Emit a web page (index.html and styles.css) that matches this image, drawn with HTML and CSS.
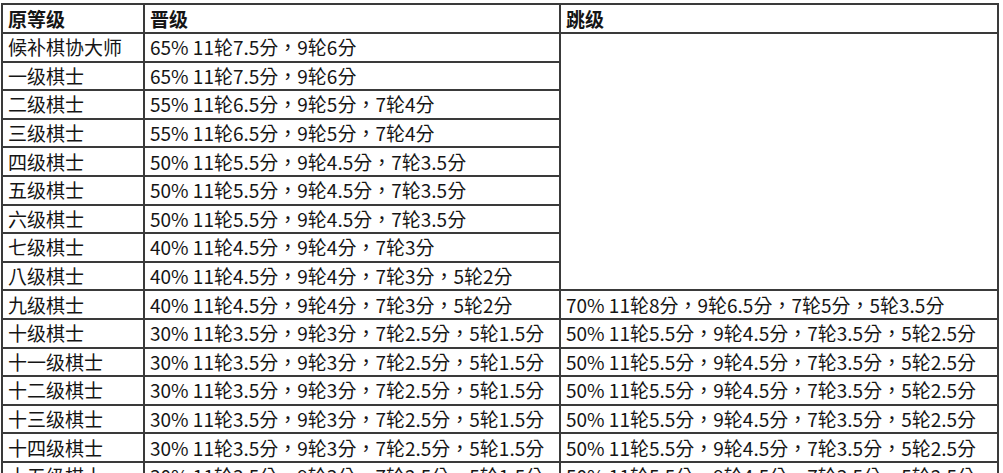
FILE: index.html
```html
<!DOCTYPE html>
<html lang="zh-Hant-TW">
<head>
<meta charset="utf-8">
<link rel="stylesheet" href="styles.css">
</head>
<body>
<div class="wrap">
<table class="grade">
<colgroup><col class="c1"><col class="c2"><col class="c3"></colgroup>
<thead>
<tr class="head"><th>原等级</th><th>晋级</th><th>跳级</th></tr>
</thead>
<tbody>
<tr><td>候补棋协大师</td><td>65% 11轮7.5分，9轮6分</td><td rowspan="9"></td></tr>
<tr><td>一级棋士</td><td>65% 11轮7.5分，9轮6分</td></tr>
<tr><td>二级棋士</td><td>55% 11轮6.5分，9轮5分，7轮4分</td></tr>
<tr><td>三级棋士</td><td>55% 11轮6.5分，9轮5分，7轮4分</td></tr>
<tr><td>四级棋士</td><td>50% 11轮5.5分，9轮4.5分，7轮3.5分</td></tr>
<tr><td>五级棋士</td><td>50% 11轮5.5分，9轮4.5分，7轮3.5分</td></tr>
<tr><td>六级棋士</td><td>50% 11轮5.5分，9轮4.5分，7轮3.5分</td></tr>
<tr><td>七级棋士</td><td>40% 11轮4.5分，9轮4分，7轮3分</td></tr>
<tr><td>八级棋士</td><td>40% 11轮4.5分，9轮4分，7轮3分，5轮2分</td></tr>
<tr><td>九级棋士</td><td>40% 11轮4.5分，9轮4分，7轮3分，5轮2分</td><td>70% 11轮8分，9轮6.5分，7轮5分，5轮3.5分</td></tr>
<tr><td>十级棋士</td><td>30% 11轮3.5分，9轮3分，7轮2.5分，5轮1.5分</td><td>50% 11轮5.5分，9轮4.5分，7轮3.5分，5轮2.5分</td></tr>
<tr><td>十一级棋士</td><td>30% 11轮3.5分，9轮3分，7轮2.5分，5轮1.5分</td><td>50% 11轮5.5分，9轮4.5分，7轮3.5分，5轮2.5分</td></tr>
<tr><td>十二级棋士</td><td>30% 11轮3.5分，9轮3分，7轮2.5分，5轮1.5分</td><td>50% 11轮5.5分，9轮4.5分，7轮3.5分，5轮2.5分</td></tr>
<tr><td>十三级棋士</td><td>30% 11轮3.5分，9轮3分，7轮2.5分，5轮1.5分</td><td>50% 11轮5.5分，9轮4.5分，7轮3.5分，5轮2.5分</td></tr>
<tr><td>十四级棋士</td><td>30% 11轮3.5分，9轮3分，7轮2.5分，5轮1.5分</td><td>50% 11轮5.5分，9轮4.5分，7轮3.5分，5轮2.5分</td></tr>
<tr><td>十五级棋士</td><td>30% 11轮3.5分，9轮3分，7轮2.5分，5轮1.5分</td><td>50% 11轮5.5分，9轮4.5分，7轮3.5分，5轮2.5分</td></tr>
</tbody>
</table>
</div>
</body>
</html>
```

FILE: styles.css
```css
html, body {
  margin: 0;
  padding: 0;
  background: #fff;
}
.wrap {
  padding: 3px 0 0 1px;
}
.grade {
  border-collapse: collapse;
  table-layout: fixed;
  width: 998px;
  font-family: "Noto Sans CJK TC", "Noto Sans CJK SC", sans-serif;
  font-size: 19px;
  color: #151515;
}
.c1 { width: 142px; }
.c2 { width: 416px; }
.c3 { width: 438px; }
.grade th, .grade td {
  border: 2px solid #3a3a3a;
  padding: 0 0 0 5px;
  text-align: left;
  white-space: nowrap;
  overflow: hidden;
  line-height: 24px;
  vertical-align: middle;
}
.grade th {
  font-weight: bold;
}
.head {
  height: 29px;
}
.grade tbody tr {
  height: 28.6px;
}
```
